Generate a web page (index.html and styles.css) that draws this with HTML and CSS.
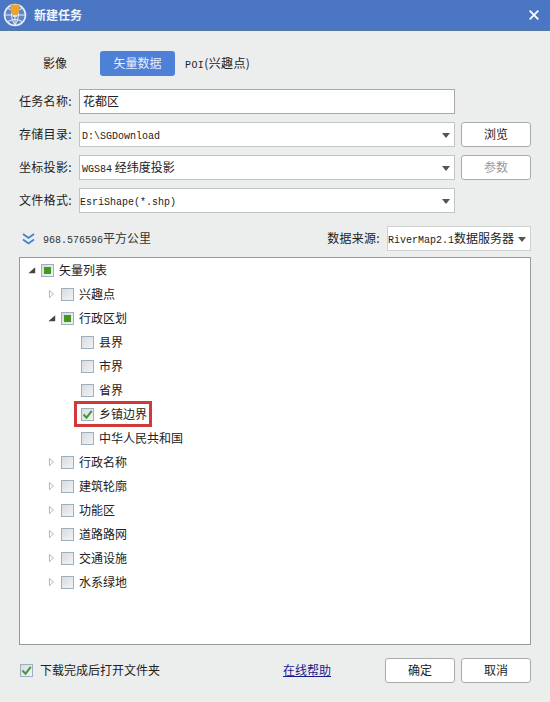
FILE: index.html
```html
<!DOCTYPE html>
<html lang="zh-CN">
<head>
  <meta charset="UTF-8">
  <title>新建任务</title>
  <link rel="stylesheet" href="styles.css">
</head>
<body>
  <!-- Title bar -->
  <div class="titlebar">
    <svg class="logo" width="26" height="26" viewBox="0 0 26 26">
      <circle cx="13" cy="13" r="10.5" fill="#5f86c9" stroke="#e8eef8" stroke-width="1.6"/>
      <path d="M3 13h20M13 3v20M6 6.5q7 4 14 0M6 19.5q7-4 14 0M13 3q-7 10 0 20M13 3q7 10 0 20" fill="none" stroke="#e8eef8" stroke-width="1"/>
      <path d="M8.5 2.5h9v5l-2.5 5.5h-4l-2.5-5.500z" fill="#eda32b"/>
      <rect x="11" y="13" width="4" height="2" fill="#f6e3b0"/>
    </svg>
    <span class="title">新建任务</span>
    <svg class="close" width="10" height="10" viewBox="0 0 10 10">
      <path d="M.7.7l8.600 8.600M9.300.7L.7 9.300" stroke="#fff" stroke-width="1.800"/>
    </svg>
  </div>

  <div class="content">
    <!-- Tabs -->
    <div class="tabs">
      <span class="tab tab-first">影像</span>
      <span class="tab tab-active">矢量数据</span>
      <span class="tab tab-poi"><span class="latin">POI</span>(兴趣点)</span>
    </div>

    <!-- Form -->
    <div class="form">
      <div class="row">
        <label>任务名称:</label>
        <div class="field field-name">花都区</div>
      </div>
      <div class="row">
        <label>存储目录:</label>
        <div class="field"><span class="latin">D:\SGDownload</span><i class="caret"></i></div>
        <div class="btn">浏览</div>
      </div>
      <div class="row">
        <label>坐标投影:</label>
        <div class="field"><span class="latin">WGS84</span>&nbsp;经纬度投影<i class="caret"></i></div>
        <div class="btn btn-disabled">参数</div>
      </div>
      <div class="row">
        <label>文件格式:</label>
        <div class="field field-format"><span class="latin">EsriShape(*.shp)</span><i class="caret"></i></div>
      </div>
    </div>

    <!-- Area and data source -->
    <div class="info">
      <svg class="chevrons" width="13" height="12" viewBox="0 0 13 12">
        <path d="M1 1l5.500 4L12 1M1 6.500l5.500 4 5.500-4" fill="none" stroke="#3f7fd6" stroke-width="1.800"/>
      </svg>
      <span class="area"><span class="latin">968.576596</span>平方公里</span>
      <span class="source-label">数据来源:</span>
      <div class="source"><span class="latin">RiverMap2.1</span>数据服务器<i class="caret"></i></div>
    </div>

    <!-- Tree -->
    <div class="tree">
      <div class="node lv1"><i class="arrow open"></i><i class="box part"></i>矢量列表</div>
      <div class="node lv2"><i class="arrow"></i><i class="box"></i>兴趣点</div>
      <div class="node lv2"><i class="arrow open"></i><i class="box part"></i>行政区划</div>
      <div class="node lv3"><i class="box"></i>县界</div>
      <div class="node lv3"><i class="box"></i>市界</div>
      <div class="node lv3"><i class="box"></i>省界</div>
      <div class="node lv3"><span class="mark"><i class="box"><svg width="11" height="11" viewBox="0 0 11 11"><path d="M1.500 5.500l3 3.200L9.800 1.800" fill="none" stroke="#3f9a3a" stroke-width="2"/></svg></i>乡镇边界</span></div>
      <div class="node lv3"><i class="box"></i>中华人民共和国</div>
      <div class="node lv2"><i class="arrow"></i><i class="box"></i>行政名称</div>
      <div class="node lv2"><i class="arrow"></i><i class="box"></i>建筑轮廓</div>
      <div class="node lv2"><i class="arrow"></i><i class="box"></i>功能区</div>
      <div class="node lv2"><i class="arrow"></i><i class="box"></i>道路路网</div>
      <div class="node lv2"><i class="arrow"></i><i class="box"></i>交通设施</div>
      <div class="node lv2"><i class="arrow"></i><i class="box"></i>水系绿地</div>
    </div>

    <!-- Footer -->
    <div class="footer">
      <i class="box box-footer"><svg width="11" height="11" viewBox="0 0 11 11"><path d="M1.500 5.500l3 3.200L9.800 1.800" fill="none" stroke="#3f9a3a" stroke-width="2"/></svg></i>
      <span class="open-folder">下载完成后打开文件夹</span>
      <a class="help">在线帮助</a>
      <div class="btn btn-ok">确定</div>
      <div class="btn">取消</div>
    </div>
  </div>
</body>
</html>
```

FILE: styles.css
```css
* {
  margin: 0;
  padding: 0;
  box-sizing: border-box;
}
body {
  width: 550px;
  height: 702px;
  overflow: hidden;
  background: #eceeee;
  color: #222;
  font-family: "Noto Sans CJK SC", "Liberation Sans", sans-serif;
  font-size: 12px;
}
i {
  font-style: normal;
}
.latin {
  font-family: "Liberation Mono", monospace;
  font-size: 10px;
}

/* Title bar */
.titlebar {
  height: 31px;
  background: #4a76c4;
  display: flex;
  align-items: center;
  padding-left: 2px;
  color: #fff;
  border-bottom: 1px solid #54789f;
}
.logo {
  flex: none;
}
.title {
  margin-left: 6px;
  padding-bottom: 2px;
  font-weight: 700;
  color: #f2f5fb;
}
.close {
  margin-left: auto;
  margin-right: 11px;
}

/* Tabs */
.content {
  padding: 20px 19px 0;
}
.tabs {
  display: flex;
  align-items: center;
  height: 25px;
  margin-bottom: 13px;
}
.tab-first {
  margin-left: 24px;
  width: 57px;
  padding-bottom: 2px;
}
.tab-active {
  width: 75px;
  height: 25px;
  line-height: 23px;
  text-align: center;
  background: #4f80d8;
  color: #e6eefb;
  border-radius: 3px;
}
.tab-poi {
  margin-left: 10px;
  padding-bottom: 2px;
  letter-spacing: .4px;
}

/* Form */
.form {
  display: flex;
  flex-direction: column;
  gap: 8px;
}
.row {
  display: flex;
  align-items: center;
  height: 25px;
}
.row label {
  width: 60px;
  flex: none;
  padding-bottom: 2px;
  letter-spacing: .3px;
}
.field {
  position: relative;
  width: 376px;
  height: 25px;
  line-height: 21px;
  background: #fff;
  border: 1px solid #c2c4c4;
  padding-left: 2px;
  white-space: nowrap;
}
.field-name {
  border-color: #a8a8a8;
  line-height: 22px;
  padding-left: 3px;
}
.field-format {
  padding-left: 0;
}
.caret {
  position: absolute;
  right: 4px;
  top: 10px;
  border: 4px solid transparent;
  border-top: 5px solid #555;
  border-bottom: 0;
}
.btn {
  width: 70px;
  height: 25px;
  line-height: 21px;
  margin-left: 6px;
  text-align: center;
  background: #fff;
  border: 1px solid #aaa;
  border-radius: 3px;
  flex: none;
}
.btn-disabled {
  color: #999;
}

/* Area and data source */
.info {
  display: flex;
  align-items: center;
  height: 25px;
  margin-top: 13px;
  margin-bottom: 6px;
}
.chevrons {
  margin-left: 3px;
}
.area {
  margin-left: 8px;
  padding-bottom: 2px;
  color: #333;
}
.source-label {
  margin-left: auto;
  margin-right: 7px;
  padding-bottom: 2px;
  letter-spacing: .3px;
}
.source {
  position: relative;
  width: 144px;
  height: 25px;
  line-height: 22px;
  background: #fff;
  border: 1px solid #d0d2d2;
  white-space: nowrap;
}

/* Tree */
.tree {
  height: 388px;
  background: #fff;
  border: 1px solid #999;
}
.node {
  height: 24px;
  display: flex;
  align-items: center;
  padding-bottom: 2px;
}
.lv1 {
  padding-left: 8px;
}
.lv2 {
  padding-left: 28px;
}
.lv3 {
  padding-left: 61px;
}
.arrow {
  width: 8px;
  height: 9px;
  margin-top: 2px;
  margin-right: 5px;
  flex: none;
  background: #b4b9bd;
  clip-path: polygon(evenodd, 12% 0, 75% 50%, 12% 100%, 12% 0, 25% 22%, 25% 78%, 60% 50%, 25% 22%);
}
.arrow.open {
  background: #444;
  clip-path: polygon(90% 20%, 90% 85%, 5% 85%);
}
.box {
  width: 13px;
  height: 13px;
  margin-top: 2px;
  margin-right: 5px;
  flex: none;
  display: flex;
  align-items: center;
  justify-content: center;
  border: 1px solid #9fb0bd;
  background: linear-gradient(135deg, #d9dbde, #f2f3f4);
}
.box.part::before {
  content: "";
  width: 7px;
  height: 7px;
  background: #3f9a1e;
}
.mark {
  display: flex;
  align-items: center;
  height: 20px;
  margin-top: 2px;
  margin-left: -4px;
  padding: 0 2px 2px 4px;
  outline: 3px solid #d23a3a;
}

/* Footer */
.footer {
  display: flex;
  align-items: center;
  height: 25px;
  margin-top: 13px;
}
.box-footer {
  margin-left: 1px;
  margin-top: 0;
}
.open-folder {
  margin-left: 2px;
  padding-bottom: 2px;
}
.help {
  margin-left: auto;
  margin-right: 54px;
  padding-bottom: 2px;
  color: #1a1a8c;
  text-decoration: underline;
}
.btn-ok {
  margin-left: 0;
}
```
